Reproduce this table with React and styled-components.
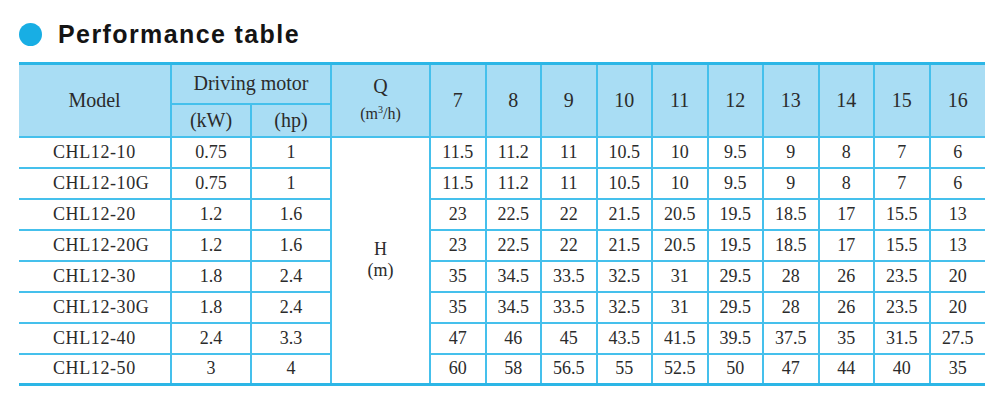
import styled, { createGlobalStyle } from "styled-components";

const GlobalStyle = createGlobalStyle`
  body {
    margin: 0;
    background: #ffffff;
  }
`;

const Page = styled.div`
  width: 1000px;
  height: 400px;
  padding: 21px 0 0 19px;
  box-sizing: border-box;
  background: #fff;
`;

const TitleRow = styled.div`
  display: flex;
  align-items: center;
  gap: 16px;
  height: 27px;
  margin-bottom: 14px;
`;

const Dot = styled.span`
  width: 23px;
  height: 23px;
  border-radius: 50%;
  background: #18aee4;
`;

const Title = styled.h2`
  margin: 0;
  font-family: "Liberation Sans", Arial, sans-serif;
  font-weight: 700;
  font-size: 25px;
  letter-spacing: 1.4px;
  color: #141414;
`;

const Table = styled.table`
  width: 966px;
  table-layout: fixed;
  border-collapse: collapse;
  font-family: "Liberation Serif", "Times New Roman", serif;
  color: #2b2b2b;
  border-top: 3px solid #2cb6e6;
  border-bottom: 3px solid #2cb6e6;
`;

const HeadRow = styled.tr`
  height: ${(p) => p.$h}px;
  background: #a9ddf4;
`;

const HeadCell = styled.th`
  font-weight: 400;
  font-size: ${(p) => p.$size || 20}px;
  text-align: center;
  vertical-align: middle;
  padding: 0;
  border: 2px solid #45c0ec;
  border-top: none;
  &:first-child {
    border-left: none;
  }
  &:last-child {
    border-right: none;
  }
`;

const Stack = styled.div`
  display: flex;
  flex-direction: column;
  align-items: center;
  line-height: ${(p) => p.$lh}px;
`;

const Small = styled.span`
  font-size: 16px;
  sup {
    font-size: 10px;
  }
`;

const Row = styled.tr`
  height: 31px;
`;

const Cell = styled.td`
  font-size: 18px;
  text-align: center;
  vertical-align: middle;
  padding: 0;
  border: 2px solid #45c0ec;
  &:first-child {
    border-left: none;
  }
  &:last-child {
    border-right: none;
  }
`;

const ModelCell = styled(Cell)`
  text-align: left;
  padding-left: 34px;
  letter-spacing: 0.6px;
`;

const flows = [7, 8, 9, 10, 11, 12, 13, 14, 15, 16];

const rows = [
  ["CHL12-10", "0.75", "1", ["11.5", "11.2", "11", "10.5", "10", "9.5", "9", "8", "7", "6"]],
  ["CHL12-10G", "0.75", "1", ["11.5", "11.2", "11", "10.5", "10", "9.5", "9", "8", "7", "6"]],
  ["CHL12-20", "1.2", "1.6", ["23", "22.5", "22", "21.5", "20.5", "19.5", "18.5", "17", "15.5", "13"]],
  ["CHL12-20G", "1.2", "1.6", ["23", "22.5", "22", "21.5", "20.5", "19.5", "18.5", "17", "15.5", "13"]],
  ["CHL12-30", "1.8", "2.4", ["35", "34.5", "33.5", "32.5", "31", "29.5", "28", "26", "23.5", "20"]],
  ["CHL12-30G", "1.8", "2.4", ["35", "34.5", "33.5", "32.5", "31", "29.5", "28", "26", "23.5", "20"]],
  ["CHL12-40", "2.4", "3.3", ["47", "46", "45", "43.5", "41.5", "39.5", "37.5", "35", "31.5", "27.5"]],
  ["CHL12-50", "3", "4", ["60", "58", "56.5", "55", "52.5", "50", "47", "44", "40", "35"]],
];

export default function App() {
  return (
    <Page>
      <GlobalStyle />
      <TitleRow>
        <Dot />
        <Title>Performance table</Title>
      </TitleRow>
      <Table>
        <colgroup>
          <col style={{ width: 152 }} />
          <col style={{ width: 80 }} />
          <col style={{ width: 80 }} />
          <col style={{ width: 99 }} />
          {flows.map((f) => (
            <col key={f} style={{ width: 55.5 }} />
          ))}
        </colgroup>
        <thead>
          <HeadRow $h={40}>
            <HeadCell rowSpan={2}>Model</HeadCell>
            <HeadCell colSpan={2}>Driving motor</HeadCell>
            <HeadCell rowSpan={2}>
              <Stack $lh={23}>
                <span>Q</span>
                <Small>
                  (m<sup>3</sup>/h)
                </Small>
              </Stack>
            </HeadCell>
            {flows.map((f) => (
              <HeadCell key={f} rowSpan={2}>
                {f}
              </HeadCell>
            ))}
          </HeadRow>
          <HeadRow $h={33}>
            <HeadCell>(kW)</HeadCell>
            <HeadCell>(hp)</HeadCell>
          </HeadRow>
        </thead>
        <tbody>
          {rows.map(([model, kw, hp, heads], i) => (
            <Row key={model}>
              <ModelCell>{model}</ModelCell>
              <Cell>{kw}</Cell>
              <Cell>{hp}</Cell>
              {i === 0 && (
                <Cell rowSpan={rows.length}>
                  <Stack $lh={21}>
                    <span>H</span>
                    <span>(m)</span>
                  </Stack>
                </Cell>
              )}
              {heads.map((h, j) => (
                <Cell key={j}>{h}</Cell>
              ))}
            </Row>
          ))}
        </tbody>
      </Table>
    </Page>
  );
}
